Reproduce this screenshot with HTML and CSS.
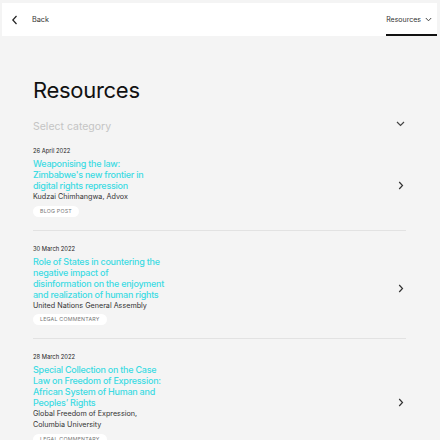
FILE: index.html
```html
<!DOCTYPE html>
<html>
<head>
<meta charset="utf-8">
<link rel="stylesheet" href="styles.css">
</head>
<body>
<header class="header">
  <a class="back">
    <svg class="back-icon" width="8" height="10" viewBox="0 0 8 10"><path d="M5.5 1 L1.8 5 L5.5 9" fill="none" stroke="#222" stroke-width="1.2"/></svg>
    <span>Back</span>
  </a>
  <nav class="nav-item">
    <span>Resources</span>
    <svg width="7" height="5" viewBox="0 0 7 5"><path d="M0.8 1 L3.5 3.8 L6.2 1" fill="none" stroke="#333" stroke-width="0.9"/></svg>
  </nav>
</header>
<main class="main">
  <h1 class="title">Resources</h1>
  <div class="select">
    <span>Select category</span>
    <svg width="9" height="6" viewBox="0 0 9 6"><path d="M1 1 L4.5 4.5 L8 1" fill="none" stroke="#444" stroke-width="1.2"/></svg>
  </div>
  <ul class="list">
    <li class="item">
      <div class="text">
        <div class="date">26 April 2022</div>
        <div class="item-title">Weaponising the law:<br>Zimbabwe's new frontier in<br>digital rights repression</div>
        <div class="author">Kudzai Chimhangwa, Advox</div>
        <span class="tag">BLOG POST</span>
      </div>
      <svg class="arrow" width="6" height="9" viewBox="0 0 6 9"><path d="M1.2 1 L4.5 4.5 L1.2 8" fill="none" stroke="#333" stroke-width="1.2"/></svg>
    </li>
    <li class="item">
      <div class="text">
        <div class="date">30 March 2022</div>
        <div class="item-title">Role of States in countering the<br>negative impact of<br>disinformation on the enjoyment<br>and realization of human rights</div>
        <div class="author">United Nations General Assembly</div>
        <span class="tag">LEGAL COMMENTARY</span>
      </div>
      <svg class="arrow" width="6" height="9" viewBox="0 0 6 9"><path d="M1.2 1 L4.5 4.5 L1.2 8" fill="none" stroke="#333" stroke-width="1.2"/></svg>
    </li>
    <li class="item">
      <div class="text">
        <div class="date">28 March 2022</div>
        <div class="item-title">Special Collection on the Case<br>Law on Freedom of Expression:<br>African System of Human and<br>Peoples’ Rights</div>
        <div class="author">Global Freedom of Expression,<br>Columbia University</div>
        <span class="tag">LEGAL COMMENTARY</span>
      </div>
      <svg class="arrow" width="6" height="9" viewBox="0 0 6 9"><path d="M1.2 1 L4.5 4.5 L1.2 8" fill="none" stroke="#333" stroke-width="1.2"/></svg>
    </li>
  </ul>
</main>
</body>
</html>
```
FILE: styles.css
```css
* { box-sizing: border-box; }
html, body { margin: 0; padding: 0; }
body {
  background: #f4f4f4;
  font-family: "Inter", "Noto Sans", sans-serif;
  color: #222;
  overflow: hidden;
  height: 440px;
}
.header {
  margin: 3px 3px 0 2px;
  height: 33px;
  background: #fff;
  display: flex;
  align-items: stretch;
  justify-content: space-between;
  padding: 0 0 0 9px;
}
.back {
  display: flex;
  align-items: center;
  gap: 13px;
  font-size: 7.3px;
  color: #333;
}
.nav-item {
  display: flex;
  align-items: center;
  gap: 4px;
  padding: 2px 5px 0 0;
  font-size: 7px;
  color: #333;
  border-bottom: 2px solid #111;
}
.main {
  padding: 40px 34px 0 33px;
}
.title {
  margin: 0;
  font-size: 22px;
  font-weight: 400;
  line-height: 28px;
  color: #111;
  letter-spacing: -0.3px;
}
.select {
  margin-top: 17px;
  display: flex;
  justify-content: space-between;
  align-items: center;
  font-size: 10.5px;
  line-height: 12px;
  color: #c4c4c4;
  padding-right: 1px;
}
.select svg { margin-top: -6px; }
.list {
  list-style: none;
  margin: 0;
  padding: 0;
}
.item {
  display: flex;
  justify-content: space-between;
  align-items: center;
  border-bottom: 1px solid #e2e2e2;
  padding: 14px 2px 13px 0;
}
.text {
  width: 150px;
  display: flex;
  flex-direction: column;
  align-items: flex-start;
}
.date {
  font-size: 5.8px;
  line-height: 8px;
  color: #222;
}
.item-title {
  margin-top: 3px;
  font-size: 9px;
  font-weight: 500;
  line-height: 11px;
  color: #3cdbe3;
  letter-spacing: -0.25px;
}
.author {
  font-size: 7.2px;
  line-height: 11px;
  color: #333;
}
.tag {
  display: block;
  margin-top: 3.5px;
  background: #fff;
  border-radius: 6px;
  height: 11px;
  line-height: 11px;
  padding: 0 7px;
  font-size: 5.3px;
  color: #777;
  letter-spacing: 0.2px;
}
.arrow { flex: none; margin-top: 7px; }
```
